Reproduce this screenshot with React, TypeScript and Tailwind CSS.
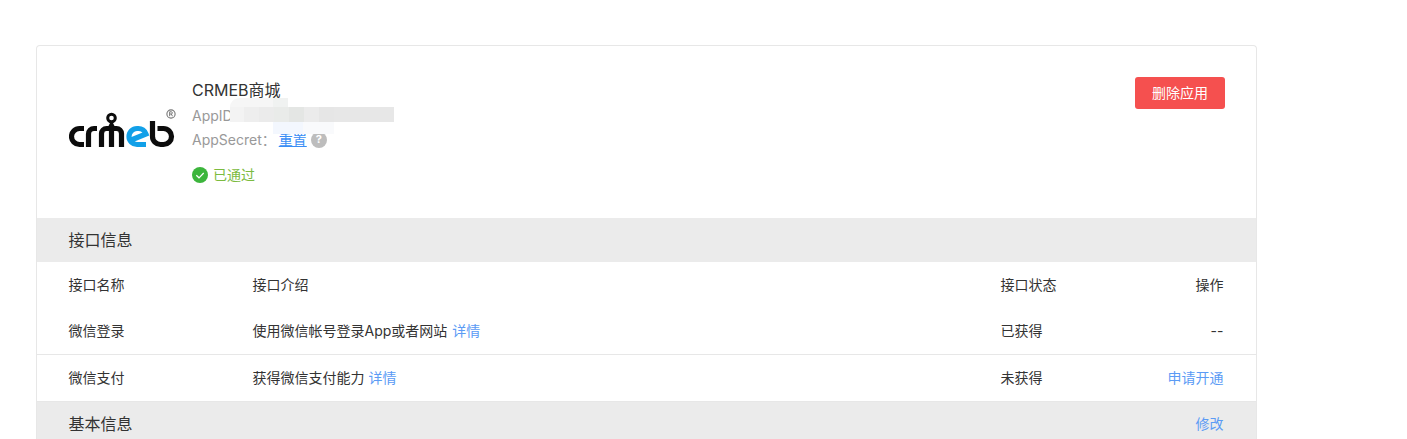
import React from "react";

const font = { fontFamily: "Inter,'Noto Sans CJK SC',sans-serif" };

function Logo() {
  return (
    <svg width="108" height="42" viewBox="0 0 108 42" className="block" fill="none">
      <g stroke="#0c0c0c" strokeWidth="5.200">
        <path d="M15 21.500H10.500a8 8 0 0 0 0 16H15" />
        <path d="M19.500 40V27a5.500 5.500 0 0 1 5.500-5.500H28" />
        <path d="M32.500 40V26.500a5 5 0 0 1 5-5H47.500a5 5 0 0 1 5 5V40M42.500 21.500V40" />
      </g>
      <circle cx="42.500" cy="11" r="3.800" stroke="#0c0c0c" strokeWidth="3" />
      <path d="M39 20l2-4h3l2 4z" fill="#0c0c0c" />
      <path d="M61 33.500L77 27a8 8 0 0 0-8-5.500h-1a8 8 0 0 0-8 8 8 8 0 0 0 8 8h9" stroke="#12a0e8" strokeWidth="5.200" />
      <path d="M83.500 14V29.500a8 8 0 0 0 8 8h3a8 8 0 0 0 0-16h-6" stroke="#0c0c0c" strokeWidth="5.200" />
    </svg>
  );
}

function Row({ name, desc, status, action, border }: { name: string; desc: React.ReactNode; status: string; action: React.ReactNode; border?: boolean }) {
  return (
    <div className={`flex h-[46px] items-center pl-[31.500px] pr-[32.500px] text-sm text-[#333] ${border ? "box-content border-b border-[#e7e7e7]" : ""}`}>
      <div className="w-[184px]">{name}</div>
      <div className="w-[748px]">{desc}</div>
      <div className="flex-1">{status}</div>
      <div className="text-right">{action}</div>
    </div>
  );
}

function Band({ title, action }: { title: string; action?: string }) {
  return (
    <div className="flex h-11 items-center justify-between bg-[#ebebeb] pl-[31.500px] pr-[32.500px] text-base text-[#333]">
      <span>{title}</span>
      {action && <a className="text-sm text-[#5b9bf5]">{action}</a>}
    </div>
  );
}

export default function App() {
  return (
    <div className="h-[439px] overflow-hidden bg-white pl-9 pt-[45px]" style={font}>
      <div className="w-[1221px] rounded-t-sm border border-b-0 border-[#e7e7e7]">
        <div className="flex h-[172px] items-start pl-8 pr-[31px]">
          <div className="relative mt-[61px] w-[123px] shrink-0">
            <Logo />
            <svg className="absolute left-[97px] top-[2px]" width="10" height="10" viewBox="0 0 9 9">
              <circle cx="4.500" cy="4.500" r="3.700" fill="none" stroke="#777" strokeWidth="1" />
              <path d="M3.300 6.500v-4h1.400a1 1 0 0 1 0 2h-1.400M4.800 4.500l1 2" fill="none" stroke="#777" strokeWidth=".9" />
            </svg>
          </div>
          <div className="relative flex-1 pt-[32px] text-sm leading-[25px] text-[#999]">
            <div className="text-base leading-6 text-[#333]">CRMEB商城</div>
            <div className="mt-[1px]">AppID</div>
            <div className="flex h-[23px] items-center">
              <span>AppSecret：</span>
              <a className="ml-[3px] text-[#3a8ef5] underline">重置</a>
              <span className="ml-1 flex h-4 w-4 items-center justify-center rounded-full bg-[#bdbdbd] text-[11px] leading-none font-bold text-white">?</span>
            </div>
            <div className="mt-[14px] flex items-center text-sm text-[#7cbb3f]">
              <svg width="16" height="16" viewBox="0 0 16 16" className="mr-[5px]">
                <circle cx="8" cy="8" r="8" fill="#3cb53c" />
                <path d="M4.300 8.200l2.700 2.600 4.700-4.800" fill="none" stroke="#fff" strokeWidth="1.200" />
              </svg>
              已通过
            </div>
            <div className="absolute left-[38px] top-[52px] flex h-[9px] w-[58px]">
              <div className="w-[43px] rounded-tl-xl bg-[#f6f6f6]" />
              <div className="flex-1 bg-[#f0f2f1]" />
            </div>
            <div className="absolute left-[38px] top-[61px] flex h-[15px] w-[164px]">
              <div className="w-[14px] bg-[#f3f3f3]" />
              <div className="w-[15px] bg-[#eeeeee]" />
              <div className="w-[15px] bg-[#ebebeb]" />
              <div className="w-[15px] bg-[#e9ebe9]" />
              <div className="w-[15px] bg-[#e4e6e4]" />
              <div className="w-[15px] bg-[#ebebeb]" />
              <div className="w-[15px] bg-[#e6e6e6]" />
              <div className="flex-1 bg-[#e7e7e7]" />
            </div>
            <div className="absolute left-[81px] top-[76px] flex h-[12px] w-[61px]">
              <div className="w-[30px] bg-[#f3f7fe]" />
              <div className="flex-1 bg-[#f9fafc]" />
            </div>
          </div>
          <button className="mt-[31px] h-8 w-[90px] rounded-[3px] bg-[#f5504f] text-sm text-white">删除应用</button>
        </div>
        <Band title="接口信息" />
        <Row name="接口名称" desc="接口介绍" status="接口状态" action="操作" />
        <Row
          name="微信登录"
          desc={<>使用微信帐号登录App或者网站 <a className="ml-px text-[#5b9bf5]">详情</a></>}
          status="已获得"
          action="--"
          border
        />
        <Row
          name="微信支付"
          desc={<>获得微信支付能力 <a className="text-[#5b9bf5]">详情</a></>}
          status="未获得"
          action={<a className="text-[#5b9bf5]">申请开通</a>}
          border
        />
        <Band title="基本信息" action="修改" />
      </div>
    </div>
  );
}
